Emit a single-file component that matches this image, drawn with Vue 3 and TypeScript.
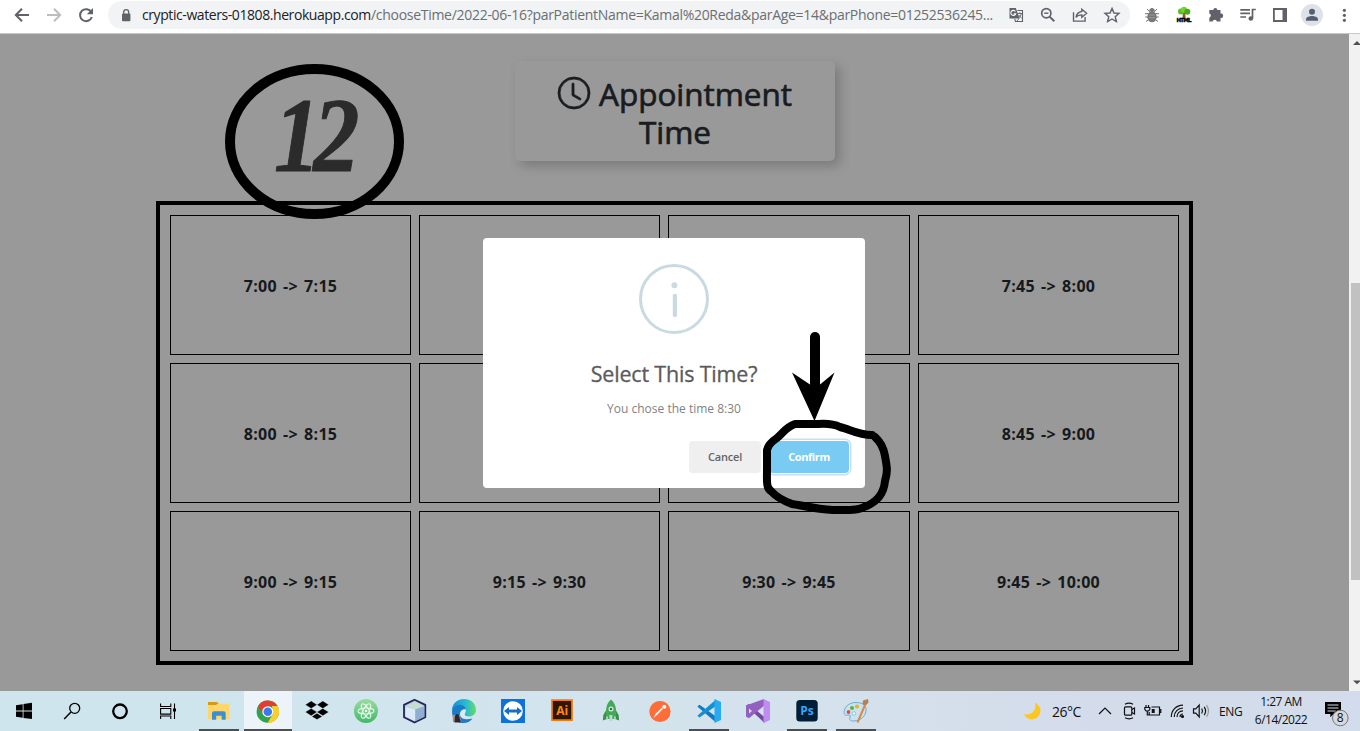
<script setup lang="ts">
interface Slot { label: string }

const slots: Slot[] = [
  '7:00 -> 7:15', '7:15 -> 7:30', '7:30 -> 7:45', '7:45 -> 8:00',
  '8:00 -> 8:15', '8:15 -> 8:30', '8:30 -> 8:45', '8:45 -> 9:00',
  '9:00 -> 9:15', '9:15 -> 9:30', '9:30 -> 9:45', '9:45 -> 10:00',
].map((label) => ({ label }))
</script>

<template>
  <div class="screen">
    <header class="toolbar">
      <div class="nav">
        <svg viewBox="0 0 32 30"><path d="M29 15H16M22 8.7L15.8 15l6.2 6.3" class="ln" /></svg>
        <svg viewBox="0 0 32 30" class="dim"><path d="M15 15h13M22 8.7l6.2 6.3-6.2 6.3" class="ln" /></svg>
        <svg viewBox="0 0 32 30"><path d="M27.3 12.2A6 6 0 1 0 27.8 17" class="ln" /><path d="M29 8v6.2h-6.2z" fill="#5f6368" /></svg>
      </div>
      <div class="omnibox">
        <svg class="lock" viewBox="0 0 10 13"><rect x="1" y="4.5" width="8.4" height="7.7" rx="1" fill="#5f6368" /><path d="M2.7 5V3.2a2.5 2.5 0 0 1 5 0V5" fill="none" stroke="#5f6368" stroke-width="1.3" /></svg>
        <div class="url"><span class="host">cryptic-waters-01808.herokuapp.com</span><span class="path">/chooseTime/2022-06-16?parPatientName=Kamal%20Reda&amp;parAge=14&amp;parPhone=01252536245...</span></div>
        <div class="actions">
          <svg viewBox="0 0 32 30">
            <g transform="translate(0 1)"><path d="M9.5 8h6.3l3.8 10.5H9.5z" fill="#5f6368" /><path d="M17.4 10.5h5.1V21.5h-7l-.8-2.6" fill="none" stroke="#5f6368" stroke-width="1.1" />
            <path d="M15.4 11.5a2.5 2.5 0 1 0 .3 2.2h-2" fill="none" stroke="#fff" stroke-width="1.1" />
            <path d="M17.6 13.5h4.5M19.8 12.3v1.2M21.3 13.8c-.5 2-1.6 3.3-2.7 4.2M18.8 15l2.7 3.2M17 21l2-2.5" fill="none" stroke="#5f6368" stroke-width=".9" /></g>
          </svg>
          <svg viewBox="0 0 32 30"><circle cx="14.3" cy="14.2" r="4.6" class="ln t" /><path d="M17.6 17.6l4.7 4.7" class="ln" /><path d="M12.2 14.2h4.2" class="ln h" /></svg>
          <svg viewBox="0 0 32 30"><path d="M9.5 13.2v8.9h11.6V18" class="ln h" /><path d="M17.8 10.2l4.8 4-4.8 4v-2.3c-2.8 0-4.6.8-5.8 2.5.5-3.4 2.5-5.4 5.8-5.9z" class="ln h" /></svg>
          <svg viewBox="0 0 32 30"><path d="M16 9.4l2 4.6 5 .4-3.8 3.3 1.2 4.9-4.4-2.6-4.4 2.6 1.2-4.9L9 14.4l5-.4z" class="ln h" /></svg>
        </div>
      </div>
      <div class="extensions">
        <svg viewBox="0 0 32 30">
          <path d="M11 9l3 3M21 9l-3 3M9 13.7h14M9.2 17h13.6M10 21.5l3-2M22 21.5l-3-2" stroke="#777" stroke-width="1" />
          <ellipse cx="16" cy="16.8" rx="4.7" ry="5.5" fill="#777" /><path d="M13 11.5a3 3 0 0 1 6 0z" fill="#8b8b8b" /><path d="M13.2 15h5.5M12.8 17.8h6.3" stroke="#a2a2a2" stroke-width=".8" /><circle cx="16" cy="10" r="2" fill="#777" />
        </svg>
        <svg viewBox="0 0 32 30">
          <path d="M15 12h2.2l.4 6.5h-3.2z" fill="#9b5425" /><circle cx="13" cy="11.6" r="3" fill="#5abf20" /><circle cx="16" cy="9.8" r="3" fill="#72d533" /><circle cx="19.3" cy="11.8" r="3" fill="#48aa15" />
          <text x="16" y="22.4" text-anchor="middle" textLength="15" class="html">HTML</text>
        </svg>
        <svg viewBox="0 0 32 30"><path d="M10 10h3.3a2 2 0 1 1 4 0h3.2v3.5a2.2 2.2 0 1 1 0 4.3v3.7h-3.6a2.2 2.2 0 0 0-4.3 0H9.3v-3.8a2.2 2.2 0 0 0 0-4.2V10z" fill="#5f6368" /></svg>
        <svg viewBox="0 0 32 30"><path d="M8.3 9.8h9.7M8.3 13.4h9.7M8.3 17h5.7" stroke="#5f6368" stroke-width="1.7" /><path d="M20.5 18.5v-9h3.3" class="ln t" /><circle cx="18.8" cy="18.5" r="2.3" fill="#5f6368" /></svg>
        <svg viewBox="0 0 32 30"><path d="M9.9 9h12.2v12H9.9z" fill="none" stroke="#5f6368" stroke-width="1.8" /><path d="M18.5 9h4v12h-4z" fill="#5f6368" /></svg>
        <svg viewBox="0 0 32 30"><circle cx="16" cy="15" r="11" fill="#dee1e6" /><circle cx="16" cy="11.7" r="3" fill="#565e73" /><path d="M10 20.7v-1.5c0-2.2 3.6-3.3 6-3.3s6 1.1 6 3.3v1.5z" fill="#565e73" /></svg>
        <svg viewBox="0 0 32 30"><g fill="#5f6368"><circle cx="16.4" cy="10.3" r="1.6" /><circle cx="16.4" cy="15.3" r="1.6" /><circle cx="16.4" cy="20.3" r="1.6" /></g></svg>
      </div>
    </header>

    <main class="viewport">
      <section class="page">
        <h1 class="heading"><svg viewBox="0 0 16 16" class="clock"><path d="M8 3.5a.5.5 0 0 0-1 0V9a.5.5 0 0 0 .252.434l3.5 2a.5.5 0 0 0 .496-.868L8 8.71V3.5z" /><path d="M8 16A8 8 0 1 0 8 0a8 8 0 0 0 0 16zm7-8A7 7 0 1 1 1 8a7 7 0 0 1 14 0z" /></svg>Appointment Time</h1>
        <div class="grid">
          <div v-for="s in slots" :key="s.label" class="slot"><span>{{ s.label }}</span></div>
        </div>
      </section>
      <aside class="scroll">
        <svg viewBox="0 0 11 12" class="arr"><path d="M4 11h8L8 7z" fill="#505050" /></svg>
        <div class="thumb"></div>
        <svg viewBox="0 0 11 12" class="arr end"><path d="M4 1.5h8L8 5.2z" fill="#505050" /></svg>
      </aside>
    </main>

    <footer class="taskbar">
      <div class="system">
        <svg viewBox="0 0 48 40"><path d="M16 14.2l6.7-1v6.4H16zM23.5 13l8.5-1.2v7.8h-8.5zM16 20.4h6.7v6.4l-6.7-1zM23.5 20.4H32V28l-8.5-1.1z" /></svg>
        <svg viewBox="0 0 48 40" class="o"><circle cx="26.7" cy="17.3" r="5" stroke-width="1.3" /><path d="M23 21l-6.8 7" stroke-width="1.5" /></svg>
        <svg viewBox="0 0 48 40" class="o"><circle cx="24" cy="20.3" r="6.8" stroke-width="2.3" /></svg>
        <svg viewBox="0 0 48 40" class="o"><path d="M16.6 12.5v3h10.2v-3M16.6 28v-3h10.2v3M16.6 17.5h10.2v5.6H16.6zM30.5 12.5v15.5" stroke-width="1.1" /><path d="M29 17.5h3v3h-3z" fill="#000" stroke="none" /></svg>
      </div>
      <div class="apps">
        <div class="app run">
          <svg viewBox="0 0 48 40"><path d="M13 11h9l2 2v5H13z" fill="#d99a13" /><path d="M13 14h8l1.5-1.2H34.5V28H13z" fill="#ffd66b" /><path d="M17 28.7v-6.5q0-2 2-2h9.7q2 0 2 2v6.5h-4v-4h-5.5v4z" fill="#3b8fd4" /></svg>
        </div>
        <div class="app run active">
          <svg viewBox="0 0 48 40"><circle cx="23.8" cy="20.7" r="11.2" fill="#31a350" /><path d="M14.1 15.1A11.2 11.2 0 0 1 33.6 15.3H24l-4.8 8.2z" fill="#e63b30" /><path d="M33.5 15.1A11.2 11.2 0 0 1 23.5 31.9l5.3-8.6L28 15.1z" fill="#fccd2b" /><circle cx="23.8" cy="20.7" r="5.5" fill="#fff" /><circle cx="23.8" cy="20.7" r="4.3" fill="#3979ed" /></svg>
        </div>
        <div class="app"><svg viewBox="0 0 48 40"><path d="M18.2 12l5.8 3.7-5.8 3.7-5.8-3.7zM29.8 12l5.8 3.7-5.8 3.7-5.8-3.7zM18.2 19.4l5.8 3.7-5.8 3.7-5.8-3.7zM29.8 19.4l5.8 3.7-5.8 3.7-5.8-3.7zM24 24.2l5.2 3.3-5.2 3-5.2-3z" transform="translate(0 -2)" stroke="#d0e5ee" stroke-width=".3" /></svg></div>
        <div class="app"><svg viewBox="0 0 48 40"><defs><linearGradient id="at" x2="0" y2="1"><stop stop-color="#9bdda1" /><stop offset="1" stop-color="#42b86a" /></linearGradient></defs><circle cx="24" cy="20" r="12" fill="url(#at)" /><g fill="none" stroke="#e7f8ea" stroke-width="1"><ellipse cx="24" cy="20" rx="3" ry="8" transform="rotate(28 24 20)" /><ellipse cx="24" cy="20" rx="3" ry="8" transform="rotate(-28 24 20)" /><ellipse cx="24" cy="20" rx="3" ry="8" transform="rotate(88 24 20)" /></g><circle cx="24" cy="20" r="1.3" fill="#fff" /></svg></div>
        <div class="app"><svg viewBox="0 0 48 40"><path d="M23.5 8.7l10.8 5.2v12.3L23.5 31.5 13 26.2V13.9z" fill="#a9c5e5" stroke="#25245b" stroke-width="1.8" stroke-linejoin="round" /><path d="M14.5 15L24 10.4l9 4.6-9 3.3z" fill="#c7ddce" /><path d="M14.5 15.5l9.5 3v11.5l-9.5-4.5z" fill="#dceaf8" /><path d="M24.5 18.5l8.8-3v10.2l-8.8 4.4z" fill="#8faed0" /></svg></div>
        <div class="app"><svg viewBox="0 0 48 40"><defs><linearGradient id="ed"><stop stop-color="#168bd7" /><stop offset=".6" stop-color="#2abdd3" /><stop offset="1" stop-color="#68dc5b" /></linearGradient></defs><path d="M12 19C12.5 12 17.5 8 24 8c7 0 12 4.6 12 11 0 4-3 6.5-7 6.5-3.5 0-5.3-1.2-4-3 2-3 .5-6.5-4-6.5-4.5 0-7 3-9 3z" fill="url(#ed)" /><path d="M12 20c1-4 5-6.5 9-6 2.5.4 4.5 2 4.7 4-4 .5-6.2 3-5.7 6 .7 4 6 5.3 12.5 3.5C30 31 26 32.5 22 32c-6-1-10-5-10-12z" fill="#1a7cc8" /><path d="M21.5 19.5c2-1.6 4-1 4 .7-.2 1.5-1.4 2.2-.8 3.7.8 1.7 3.4 2.2 6 1.8-4 2.2-9.2.8-10-2.3-.3-1.5 0-3 .8-3.9z" fill="#dcebf4" /><path d="M12.5 24h7.5l1.5 7H13z" fill="#a88c79" /><path d="M15 25q2-4 4 0l2 6.5h-6.5z" fill="#28283a" /><circle cx="17.3" cy="24.7" r="1.5" fill="#35241f" /></svg></div>
        <div class="app"><svg viewBox="0 0 48 40"><path d="M12 8h24v24H12z" fill="#0d72d9" /><circle cx="24" cy="20" r="9.8" fill="#fff" /><path d="M15 20l5-4v2.5h8V16l5 4-5 4v-2.5h-8V24z" fill="#1270c9" /></svg></div>
        <div class="app"><svg viewBox="0 0 48 40"><path d="M14 9.2h20v20H14z" fill="#311702" stroke="#f47b0a" stroke-width="1.7" /><text x="24.2" y="24" text-anchor="middle" class="ai">Ai</text></svg></div>
        <div class="app"><svg viewBox="0 0 48 40"><path d="M19 19.5l-2.7 4.5-.4 5.5 4.5-1.8M29 19.5l2.7 4.5.4 5.5-4.5-1.8" fill="#389246" /><path d="M24 8.5c5 4 6 11 4.5 19.5h-9C18 20 19 12.5 24 8.5z" fill="#43a957" /><circle cx="24" cy="18" r="2.5" fill="#dcece5" /><circle cx="24" cy="18" r="1.3" fill="#2b7845" /><path d="M22.4 24h3v6h-3zM19.3 25.5h1.6v3.5h-1.6zM27.1 25.5h1.6v3.5h-1.6z" fill="#c5d3d8" /></svg></div>
        <div class="app"><svg viewBox="0 0 48 40"><circle cx="24" cy="20.5" r="10.6" fill="#ff6c37" /><path d="M17.5 27l2.3-4.5 6-5.8 1.2 1.2-5.6 6z" fill="#fff" /><circle cx="28.3" cy="15.7" r="2" fill="#fff" /><path d="M19 26l8.4-8" stroke="#ff6c37" stroke-width=".5" /></svg></div>
        <div class="app run"><svg viewBox="0 0 48 40"><path d="M12.3 15.5l2.2-1.8L31 25.5v6z" fill="#1479bd" /><path d="M12.3 24.8l2.2 1.8L31 15V8.5z" fill="#168fd1" /><path d="M29.5 8l6.5 3v18l-6.5 3z" fill="#27aaf0" /></svg></div>
        <div class="app"><svg viewBox="0 0 48 40"><path d="M12 14.5l3-1.6 15.5 13.2v5.9z" fill="#744aa1" /><path d="M12 14.5v11l3 1.7 15-12.5V8z" fill="#9360c0" /><path d="M15 17.5v5l3-2.5z" fill="#d2deeb" /><path d="M29.5 8l6.5 3v18l-6.5 3z" fill="#c18cf0" /></svg></div>
        <div class="app run"><svg viewBox="0 0 48 40"><rect x="13.3" y="9" width="21.4" height="21.5" rx="3.5" fill="#001e36" /><text x="24" y="24" text-anchor="middle" class="ps">Ps</text></svg></div>
        <div class="app run"><svg viewBox="0 0 48 40"><path d="M24 11.5c7 0 11 3.5 10 8.5-.8 5.5-5.5 9.7-12 10-4 .2-5.2-2-3.8-4 1-1.6-.6-2.5-2.6-1.8-3 1-4-2-3.2-5 1.3-4.7 5.8-7.7 11.6-7.7z" fill="#c8e3f2" stroke="#67a5c6" stroke-width=".9" /><circle cx="16.5" cy="21" r="1.9" fill="#e64d42" /><circle cx="20" cy="17" r="2" fill="#55b648" /><circle cx="25" cy="15.5" r="2.1" fill="#f3b321" /><circle cx="22" cy="22.5" r="1.8" fill="#eef6fa" stroke="#70a9c5" stroke-width=".6" /><path d="M25.5 31.5L33 14" stroke="#dc8840" stroke-width="2" /><path d="M30.5 13l.5-3.5 5-1.5.6 3.5-3 3z" fill="#b28258" /></svg></div>
      </div>
      <div class="tray">
        <svg class="moon" viewBox="0 0 20 20"><path d="M12 1.5c7.5 4 7 12.5 1 15.8-4.5 2.5-9.8.6-12-4 7.5 1 13-3.5 11-11.8z" fill="#fcc622" /></svg>
        <span class="temp">26°C</span>
        <svg class="ico" viewBox="0 0 24 24"><path d="M6 15l6-6 6 6" /></svg>
        <svg class="ico" viewBox="0 0 24 24"><rect x="7.5" y="7.8" width="7.3" height="8.4" rx="1" /><path d="M14.8 10.5l2.7-1.5v6l-2.7-1.5M8 5.2q4-2 8 0M8 18.8q4 2 8 0" /></svg>
        <svg class="ico" viewBox="0 0 24 24"><path d="M10.5 8h8v8H8.2v-3M18.5 10.5h1.3v3h-1.3M5 6v2.5M7.5 6v2.5M3.8 8.5h5v1.7q-.7 2-2.5 2t-2.5-2zM6.3 12.2v3.8h2" /><path d="M10.7 10h3v4h-3z" fill="#111" stroke="none" /></svg>
        <svg class="ico" viewBox="0 0 24 24"><path d="M6.3 18C6.3 11 11 6.5 18 6.2M9.2 18c0-5 3.8-8.8 8.8-9M12 18c0-3.5 2.5-6 6-6.2M15 18q0-3 3-3" /><circle cx="17.5" cy="17.5" r="1" fill="#111" /></svg>
        <svg class="ico" viewBox="0 0 24 24"><path d="M4.5 9.8h2.3L10.2 6v12l-3.4-3.8H4.5zM12.7 9.5q1.6 2.5 0 5M15.2 7.8q2.8 4.2 0 8.4" /><path d="M17.5 6.2q4 5.8 0 11.6" stroke="#999" /></svg>
        <span class="lang">ENG</span>
        <div class="clockbox"><span class="hour">1:27 AM</span><span class="date">6/14/2022</span></div>
        <svg class="note" viewBox="0 0 28 32"><path d="M1 7h16v12H9.5l-3.2 3.2V19H1z" /><path d="M3.5 10h11M3.5 13h11M3.5 16h8" stroke="#d5dfec" stroke-width="1" /><circle cx="16.3" cy="23" r="7.8" fill="#d6d9dc" stroke="#777" stroke-width="1" /><text x="16.3" y="27.3" text-anchor="middle" class="badge">8</text></svg>
      </div>
    </footer>

    <div class="modal">
      <svg class="info" viewBox="0 0 70 70"><circle cx="35" cy="35" r="33.5" fill="none" stroke="#c9dae1" stroke-width="3" /><circle cx="35.4" cy="21.2" r="3" fill="#c9dae1" /><rect x="33.8" y="30" width="4.2" height="23" rx="1.4" fill="#c9dae1" /></svg>
      <h2><span>Select This Time?</span></h2>
      <p><span>You chose the time 8:30</span></p>
      <div class="buttons">
        <button class="cancel"><span>Cancel</span></button>
        <button class="confirm"><span>Confirm</span></button>
      </div>
    </div>

    <!-- Hand-drawn markup layer -->
    <svg class="ink" viewBox="0 0 1360 731">
      <ellipse cx="314.5" cy="141.5" rx="84.5" ry="72.5" fill="none" stroke="#000" stroke-width="10" />
      <text transform="translate(274 171) scale(.87 1)" x="0 45" y="0" class="step">12</text>
      <path d="M815 337v50" stroke="#000" stroke-width="10" stroke-linecap="round" />
      <path d="M792 372.5l18 12h10l14.5-12L814.5 421z" />
      <path d="M872 435C858 435 849 429 840 427Q832 423 818 424H795C786 427 783 433 777 438C771 442 768 445 767 450V470C767 481 766 488 771 491C777 498 784 501 792 504C806 506 814 509 833 510C845 510 858 511 864 507C878 502 884 492 885 481C888 471 887 467 885 456Q883 444 875 437" fill="none" stroke="#000" stroke-width="8" stroke-linecap="round" stroke-linejoin="round" />
    </svg>
  </div>
</template>

<style>
html, body { margin: 0; overflow: hidden; }
</style>

<style scoped>
.screen { position: relative; width: 1360px; height: 731px; display: flex; flex-direction: column; overflow: hidden; font-family: "Open Sans", "Noto Sans", sans-serif; background: #999; }
svg { display: block; flex: none; }
.toolbar { box-sizing: border-box; height: 34px; flex: none; display: flex; align-items: flex-start; background: #fff; border-bottom: 1px solid #c9c9c9; }
.nav { display: flex; width: 108px; }
.nav svg, .actions svg, .extensions svg { width: 32px; height: 30px; }
.ln { fill: none; stroke: #5f6368; stroke-width: 2; }
.ln.t { stroke-width: 1.7; }
.ln.h { stroke-width: 1.4; }
.dim .ln { stroke: #bbbdbf; }
.omnibox { box-sizing: border-box; width: 1022px; height: 28px; margin-top: 1px; border-radius: 14px; background: #f1f3f4; display: flex; align-items: center; padding: 0 2px 0 13px; }
.lock { width: 10px; height: 13px; margin-right: 11px; }
.url { flex: 1; min-width: 0; display: flex; font-size: 14px; line-height: 28px; white-space: nowrap; color: #6b6e72; }
.host { color: #202124; width: 229px; letter-spacing: -.42px; }
.path { letter-spacing: -.29px; }
.actions { display: flex; margin-top: -2px; }
.extensions { display: flex; padding-left: 6px; }
.html { font: 900 5.5px "DejaVu Sans", sans-serif; stroke: #000; stroke-width: .4px; }

.viewport { height: 657px; flex: none; display: flex; }
.page { flex: 1; background: #999; display: flex; flex-direction: column; padding: 27px 0 0 156px; }
.heading { box-sizing: border-box; width: 320px; height: 100px; margin: 0 0 40px 359px; padding: 14px 30px 0; border-radius: 5px; box-shadow: 5px 5px 12px rgba(0, 0, 0, .2); color: #191c1f; font-size: 31.5px; font-weight: 500; line-height: 38px; letter-spacing: -.05px; text-align: center; background: #999; -webkit-text-stroke: .7px #191c1f; }
.clock { display: inline-block; width: 32px; height: 32px; margin-right: 9px; vertical-align: -3px; fill: #191c1f; stroke: #191c1f; stroke-width: .4; overflow: visible; }
.grid { box-sizing: border-box; width: 1037px; height: 464px; border: 4px solid #000; padding: 10px; display: grid; grid-template-columns: 241px 241px 242px 261px; grid-template-rows: repeat(3, 140px); gap: 8px; }
.slot { border: 1px solid #000; display: flex; align-items: center; justify-content: center; font-size: 16px; font-weight: 700; letter-spacing: .3px; word-spacing: 1.7px; color: #16191c; padding-top: 1px; white-space: pre; }
.scroll { width: 11px; background: #f1f1f1; display: flex; flex-direction: column; }
.arr { width: 11px; height: 12px; }
.thumb { margin: 237px 0 0 2px; height: 297px; background: #c1c1c1; }
.arr.end { margin-top: auto; }

.taskbar { height: 40px; flex: none; display: flex; background: linear-gradient(90deg, #cee5ee 0, #d1e5ee 30%, #d4e2ec 60%, #d4dceb 80%, #d3dcec 100%); }
.system { display: flex; width: 195px; }
.system svg, .app svg { width: 48px; height: 40px; }
.o { fill: none; stroke: #000; }
.apps { display: flex; gap: 1px; width: 828px; }
.app { width: 48px; height: 40px; position: relative; }
.run::after { content: ""; position: absolute; left: 4px; bottom: 0; width: 40px; height: 2px; background: #4c4e52; }
.active { background: #ecf4f9; }
.active::after { left: 0; width: 48px; }
.ai { font: 700 12px "Open Sans", sans-serif; fill: #ff8a13; }
.ps { font: 700 12px "Open Sans", sans-serif; fill: #35a6f8; }
.tray { display: flex; align-items: center; color: #111; white-space: nowrap; }
.moon { width: 20px; height: 20px; margin-right: 9px; }
.temp { width: 41px; font-size: 14px; letter-spacing: -.5px; }
.ico { width: 24px; height: 24px; fill: none; stroke: #111; stroke-width: 1.2; }
.lang { width: 35px; margin-left: 6px; font-size: 12px; letter-spacing: -.3px; }
.clockbox { width: 54px; display: flex; flex-direction: column; align-items: center; font-size: 12px; line-height: 18px; letter-spacing: -.5px; }
.note { width: 28px; height: 32px; margin-left: 16px; }
.badge { font: 12px "Open Sans", sans-serif; fill: #111; }

.modal { position: absolute; left: 483px; top: 238px; width: 382px; height: 250px; border-radius: 4px; background: #fff; display: flex; flex-direction: column; align-items: center; }
.info { width: 70px; height: 70px; margin-top: 26px; }
h2 { margin: 25px 0 0; font-size: 21.5px; line-height: 30px; font-weight: 400; letter-spacing: -.18px; color: #5b5b5b; -webkit-text-stroke: .3px #5b5b5b; }
p { margin: 11px 0 0; font-size: 12px; line-height: 18px; color: #828282; }
.buttons { align-self: stretch; display: flex; justify-content: flex-end; gap: 8px; margin: 23px 16px 0 0; }
button { box-sizing: border-box; height: 32px; border: 0; border-radius: 4px; padding: 0; font: 600 11px/32px "Open Sans", sans-serif; letter-spacing: -.2px; }
.cancel { width: 72px; background: #efefef; color: #666; }
.confirm { width: 80px; background: #79cbf4; color: #fff; font-weight: 700; letter-spacing: -.4px; box-shadow: 0 0 0 1px #fff, 0 0 0 2.5px #c7dff0; }
.ink { position: absolute; inset: 0; width: 1360px; height: 731px; }
.step { font: italic 700 106px "Liberation Serif", serif; fill: #2b2b2b; stroke: #2b2b2b; stroke-width: 1px; stroke-linejoin: round; }
</style>
